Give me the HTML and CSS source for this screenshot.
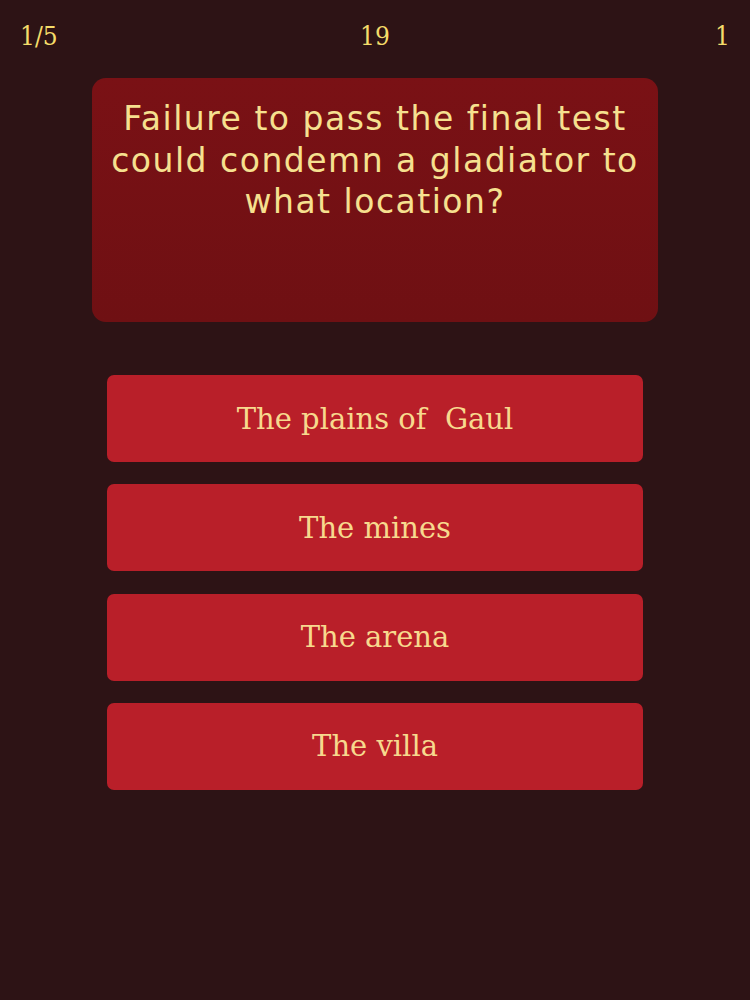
FILE: index.html
```html
<!DOCTYPE html>
<html lang="en">
<head>
  <meta charset="UTF-8">
  <title>Gladiator Quiz</title>
  <link rel="stylesheet" href="styles.css">
</head>
<body>
  <div class="topbar">
    <span class="stat left">1/5</span>
    <span class="stat mid">19</span>
    <span class="stat right">1</span>
  </div>

  <div class="question">Failure to pass the final test could condemn a gladiator to what location?</div>

  <div class="answers">
    <div class="answer">The plains of&nbsp; Gaul</div>
    <div class="answer">The mines</div>
    <div class="answer">The arena</div>
    <div class="answer">The villa</div>
  </div>
</body>
</html>
```

FILE: styles.css
```css
body { margin: 0; background-color: #2d1315; color: #f6df8c; height: 1000px; }
.topbar { display: grid; grid-template-columns: 1fr auto 1fr; padding: 21px 20px 0 20px; height: 58px; box-sizing: border-box; font-family: 'DejaVu Serif Condensed', 'DejaVu Serif', serif; font-size: 26px; line-height: 30px; color: #f4dc6a; }
.left { text-align: left; }
.mid { text-align: center; }
.right { text-align: right; }
.question { margin: 20px 92px 0 92px; height: 244px; box-sizing: border-box; padding: 20px 10px; border-radius: 14px; background: linear-gradient(#7a1115, #6f1013); font-family: 'DejaVu Sans', sans-serif; font-size: 33px; letter-spacing: 1.5px; font-variant-ligatures: none; line-height: 41.5px; text-align: center; color: #f6e08f; }
.answers { display: flex; flex-direction: column; gap: 22.3px; margin: 53px 107px 0 107px; }
.answer { height: 87px; display: flex; align-items: center; justify-content: center; border-radius: 7px; background-color: #b91f29; font-family: 'DejaVu Serif', serif; font-size: 29px; color: #f7d98e; }
```
